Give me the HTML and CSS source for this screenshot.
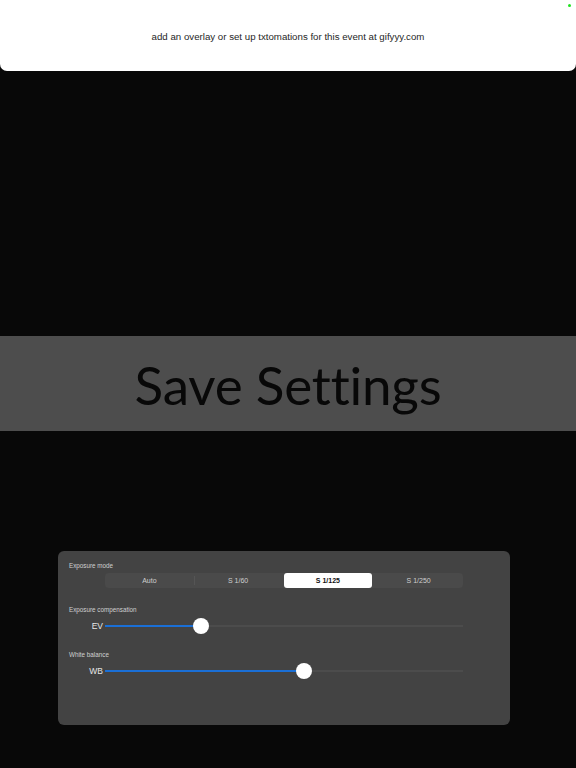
FILE: index.html
```html
<!DOCTYPE html>
<html>
<head>
<meta charset="utf-8">
<link rel="stylesheet" href="styles.css">
</head>
<body>
<div class="banner">
  <p class="banner-text">add an overlay or set up txtomations for this event at gifyyy.com</p>
  <span class="dot"></span>
</div>
<div class="band"><h1 class="save">Save Settings</h1></div>
<div class="panel">
  <div class="label first">Exposure mode</div>
  <div class="row">
    <div class="row-label"></div>
    <div class="segmented">
      <div class="seg">Auto</div>
      <div class="seg div">S 1/60</div>
      <div class="seg sel">S 1/125</div>
      <div class="seg">S 1/250</div>
    </div>
  </div>
  <div class="label gap1">Exposure compensation</div>
  <div class="row slider-row">
    <div class="row-label">EV</div>
    <div class="slider">
      <div class="fill" style="width:96px"></div>
      <div class="thumb" style="left:96px"></div>
    </div>
  </div>
  <div class="label gap2">White balance</div>
  <div class="row slider-row">
    <div class="row-label">WB</div>
    <div class="slider">
      <div class="fill" style="width:199px"></div>
      <div class="thumb" style="left:199px"></div>
    </div>
  </div>
</div>
</body>
</html>
```
FILE: styles.css
```css
html, body {
  margin: 0;
  padding: 0;
  background: #080808;
  width: 576px;
  height: 768px;
  overflow: hidden;
  font-family: "Liberation Sans", Arial, sans-serif;
}
.banner {
  position: relative;
  height: 71px;
  background: #ffffff;
  border-radius: 0 0 7px 7px;
  display: flex;
  align-items: center;
  justify-content: center;
}
.banner-text {
  margin: 0;
  font-size: 9.7px;
  color: #262626;
  padding-top: 2px;
}
.dot {
  position: absolute;
  right: 5px;
  top: 4px;
  width: 3px;
  height: 3px;
  border-radius: 50%;
  background: #1fe31f;
}
.band {
  margin-top: 265px;
  height: 95px;
  background: #4d4d4d;
  display: flex;
  align-items: center;
  justify-content: center;
}
.save {
  margin: 0;
  font-family: Lato, "Liberation Sans", sans-serif;
  font-weight: 400;
  font-size: 53px;
  color: #080808;
  letter-spacing: -0.2px;
  padding-top: 2px;
}
.panel {
  margin: 120px 0 0 58px;
  width: 452px;
  height: 174px;
  box-sizing: border-box;
  padding: 10px 47px 0 11px;
  background: #434343;
  border-radius: 6px;
}
.label {
  font-size: 6.3px;
  line-height: 10px;
  height: 10px;
  color: #d0d0d0;
}
.gap1 { margin-top: 17px; }
.gap2 { margin-top: 14px; }
.row {
  display: flex;
  align-items: center;
  margin-top: 2px;
}
.slider-row {
  height: 20px;
  margin-top: 1px;
}
.row-label {
  width: 36px;
  box-sizing: border-box;
  padding-right: 2px;
  text-align: right;
  font-size: 8.5px;
  color: #e6e6e6;
}
.segmented {
  flex: 1;
  height: 15px;
  background: #4a4a4a;
  border-radius: 4px;
  display: flex;
}
.seg {
  flex: 1;
  font-size: 7px;
  line-height: 15px;
  text-align: center;
  color: #cfcfcf;
  position: relative;
}
.seg.div::before {
  content: "";
  position: absolute;
  left: 0;
  top: 3px;
  bottom: 3px;
  width: 1px;
  background: #555;
}
.seg.sel {
  background: #fff;
  color: #111;
  border-radius: 3px;
  font-weight: 700;
  margin: 0 2px 0 1px;
}
.slider {
  flex: 1;
  position: relative;
  height: 2px;
  background: #4c4c4c;
}
.fill {
  position: absolute;
  left: 0;
  top: 0;
  height: 2px;
  background: #1a6fd6;
}
.thumb {
  position: absolute;
  top: -7px;
  width: 16px;
  height: 16px;
  margin-left: -8px;
  border-radius: 50%;
  background: #fff;
}
```
